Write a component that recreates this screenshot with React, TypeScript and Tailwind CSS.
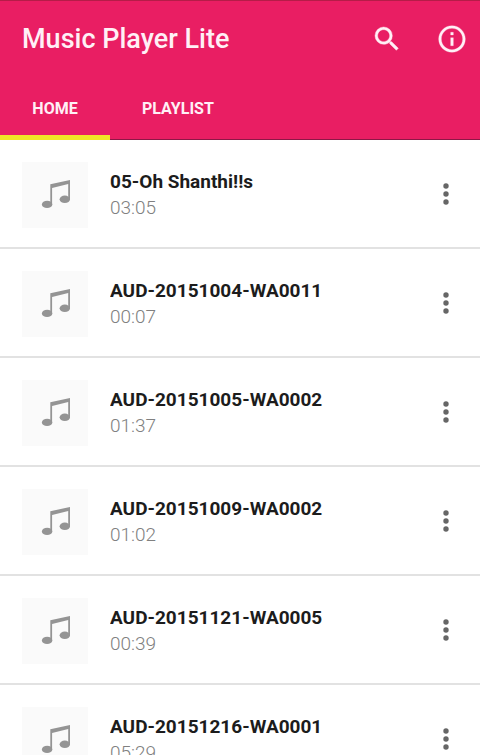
import React from "react";

type Track = { title: string; duration: string };

const tracks: Track[] = [
  { title: "05-Oh Shanthi!!s", duration: "03:05" },
  { title: "AUD-20151004-WA0011", duration: "00:07" },
  { title: "AUD-20151005-WA0002", duration: "01:37" },
  { title: "AUD-20151009-WA0002", duration: "01:02" },
  { title: "AUD-20151121-WA0005", duration: "00:39" },
  { title: "AUD-20151216-WA0001", duration: "05:29" },
];

function SearchIcon() {
  return (
    <svg viewBox="0 0 24 24" className="size-8" fill="currentColor" stroke="currentColor" strokeWidth="0.3" aria-hidden="true">
      <path d="M15.5 14h-.79l-.28-.27A6.47 6.47 0 0 0 16 9.5 6.5 6.5 0 1 0 9.5 16c1.61 0 3.09-.59 4.23-1.57l.27.28v.79l5 4.99L20.49 19l-4.99-5zm-6 0C7.01 14 5 11.99 5 9.5S7.01 5 9.5 5 14 7.01 14 9.5 11.99 14 9.5 14z" />
    </svg>
  );
}

function InfoIcon() {
  return (
    <svg viewBox="0 0 24 24" className="size-8" fill="currentColor" stroke="currentColor" strokeWidth="0.2" aria-hidden="true">
      <path d="M11 17h2v-6h-2v6zm1-15C6.48 2 2 6.48 2 12s4.48 10 10 10 10-4.48 10-10S17.52 2 12 2zm0 18c-4.41 0-8-3.59-8-8s3.59-8 8-8 8 3.59 8 8-3.59 8-8 8zM11 9h2V7h-2v2z" />
    </svg>
  );
}

function NoteIcon() {
  return (
    <svg viewBox="0 0 30 30" className="size-[30px]" aria-hidden="true" fill="#949494">
      <path d="M10.3 4.2 30 0V19.5h-1.8V4L12.1 8V24.5h-1.8z" />
      <ellipse cx="7.1" cy="24.4" rx="5.2" ry="3.7" />
      <ellipse cx="24.8" cy="19.3" rx="5.2" ry="3.7" />
    </svg>
  );
}

function TrackRow({ title, duration }: Track) {
  return (
    <li className="flex h-[109px] shrink-0 items-start border-b-2 border-[#e2e2e2] pt-[22px] pr-[18px] pl-[22px]">
      <div className="flex size-[66px] shrink-0 items-center justify-center bg-[#fafafa]">
        <NoteIcon />
      </div>
      <div className="ml-[22px] min-w-0 flex-1 pt-[7px]">
        <h2 className="truncate text-[19px] leading-[26px] font-bold text-[#1c1c1c]">{title}</h2>
        <p className="text-[19px] leading-[26px] font-light text-[#808080]">{duration}</p>
      </div>
      <button type="button" aria-label={`Options for ${title}`} className="mt-4 flex size-8 items-center justify-center">
        <svg viewBox="0 0 6 22" className="h-[22px] w-[6px]" fill="#666666" aria-hidden="true">
          <circle cx="3" cy="3" r="2.7" />
          <circle cx="3" cy="11" r="2.7" />
          <circle cx="3" cy="19" r="2.7" />
        </svg>
      </button>
    </li>
  );
}

export default function App() {
  return (
    <div className="flex h-screen flex-col bg-white font-[Roboto,sans-serif]">
      <header className="shrink-0 border-t border-[#b51c48] bg-[#e91e63] text-[#fff0f6]">
        <div className="flex h-[76px] items-center justify-between pr-3 pl-[22px]">
          <h1 className="text-[27px] leading-8 font-medium">Music Player Lite</h1>
          <div className="flex gap-[33px]">
            <button type="button" aria-label="Search">
              <SearchIcon />
            </button>
            <button type="button" aria-label="About">
              <InfoIcon />
            </button>
          </div>
        </div>
        <nav className="flex h-[63px] border-b border-[#8e1746] text-base font-bold">
          <a
            href="#home"
            aria-current="page"
            className="-mb-px flex w-[110px] items-center justify-center border-b-[5px] border-[#f0e526] pt-[5px]"
          >
            HOME
          </a>
          <a href="#playlist" className="flex items-center px-8 pt-0.5">
            PLAYLIST
          </a>
        </nav>
      </header>
      <main className="min-h-0 flex-1 overflow-y-auto [scrollbar-width:none]">
        <ul>
          {tracks.map((track) => (
            <TrackRow key={track.title} {...track} />
          ))}
        </ul>
      </main>
    </div>
  );
}
